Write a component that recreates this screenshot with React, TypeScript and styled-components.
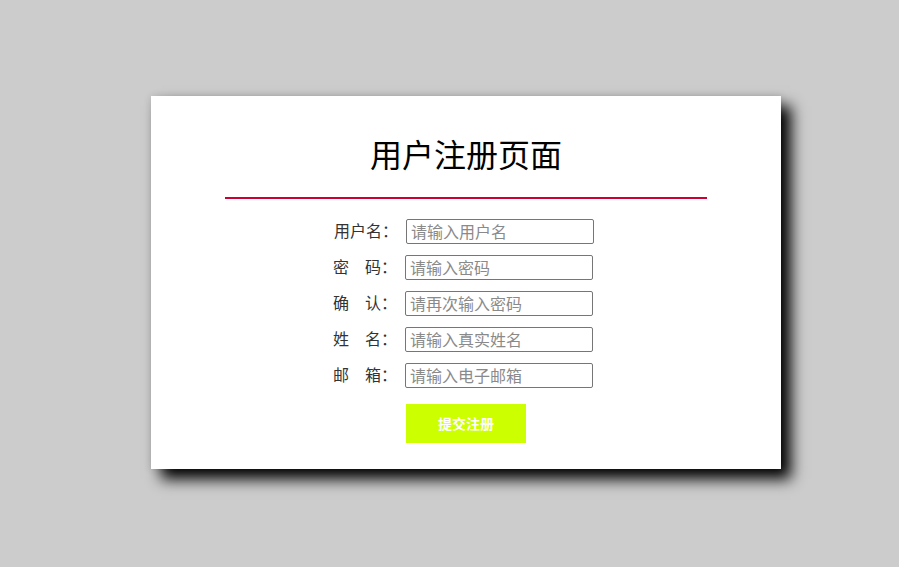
import React from "react";
import styled, { createGlobalStyle } from "styled-components";

const GlobalStyle = createGlobalStyle`
  html, body {
    margin: 0;
    padding: 0;
    background: #cccccc;
    font-family: "Noto Sans CJK SC", "Noto Sans", sans-serif;
  }
  #root {
    min-height: 567px;
  }
`;

const Page = styled.div`
  padding: 96px 0 0 151px;
  display: flex;
  align-items: flex-start;
`;

const Card = styled.div`
  width: 630px;
  height: 373px;
  box-sizing: border-box;
  background: #ffffff;
  box-shadow: 10px 10px 14px #000000, 0 0 8px rgba(0, 0, 0, 0.12);
  padding-top: 37px;
  display: flex;
  flex-direction: column;
  align-items: center;
`;

const Title = styled.h1`
  margin: 0;
  font-size: 32px;
  line-height: 40px;
  font-weight: 400;
  color: #000000;
`;

const Divider = styled.div`
  width: 482px;
  height: 2px;
  background: #cc0033;
  margin-top: 24px;
`;

const Form = styled.form`
  align-self: flex-start;
  margin-left: 182px;
  margin-top: 20px;
  display: flex;
  flex-direction: column;
  gap: 11px;
`;

const Row = styled.div<{ $shift?: number }>`
  display: flex;
  align-items: center;
  height: 25px;
  padding-left: ${(p) => p.$shift ?? 0}px;
`;

const Label = styled.label`
  width: 72px;
  font-size: 16px;
  line-height: 25px;
  color: #333333;
  white-space: pre;
  margin-top: -2px;
`;

const Input = styled.input`
  box-sizing: border-box;
  width: 188px;
  height: 25px;
  margin: 0;
  padding: 0 0 2px 4px;
  border: 1px solid #767676;
  border-radius: 2px;
  font-family: "Noto Sans CJK SC", "Noto Sans", sans-serif;
  font-size: 16px;
  color: #333;
  outline: none;
  &::placeholder {
    color: #8a8a8a;
  }
`;

const ButtonRow = styled.div`
  margin-top: 5px;
  padding-left: 73px;
`;

const Submit = styled.button`
  width: 120px;
  height: 39px;
  padding: 0 0 2px;
  border: none;
  background: #ccff00;
  color: #ffffff;
  font-family: "Noto Sans CJK SC", "Noto Sans", sans-serif;
  font-size: 14px;
  font-weight: 700;
  cursor: pointer;
`;

const fields = [
  { label: "用户名：", placeholder: "请输入用户名", shift: 1 },
  { label: "密　码：", placeholder: "请输入密码", shift: 0 },
  { label: "确　认：", placeholder: "请再次输入密码", shift: 0 },
  { label: "姓　名：", placeholder: "请输入真实姓名", shift: 0 },
  { label: "邮　箱：", placeholder: "请输入电子邮箱", shift: 0 },
];

export default function App() {
  return (
    <>
      <GlobalStyle />
      <Page>
        <Card>
          <Title>用户注册页面</Title>
          <Divider />
          <Form onSubmit={(e) => e.preventDefault()}>
            {fields.map((f) => (
              <Row key={f.placeholder} $shift={f.shift}>
                <Label>{f.label}</Label>
                <Input type="text" placeholder={f.placeholder} />
              </Row>
            ))}
            <ButtonRow>
              <Submit type="submit">提交注册</Submit>
            </ButtonRow>
          </Form>
        </Card>
      </Page>
    </>
  );
}
